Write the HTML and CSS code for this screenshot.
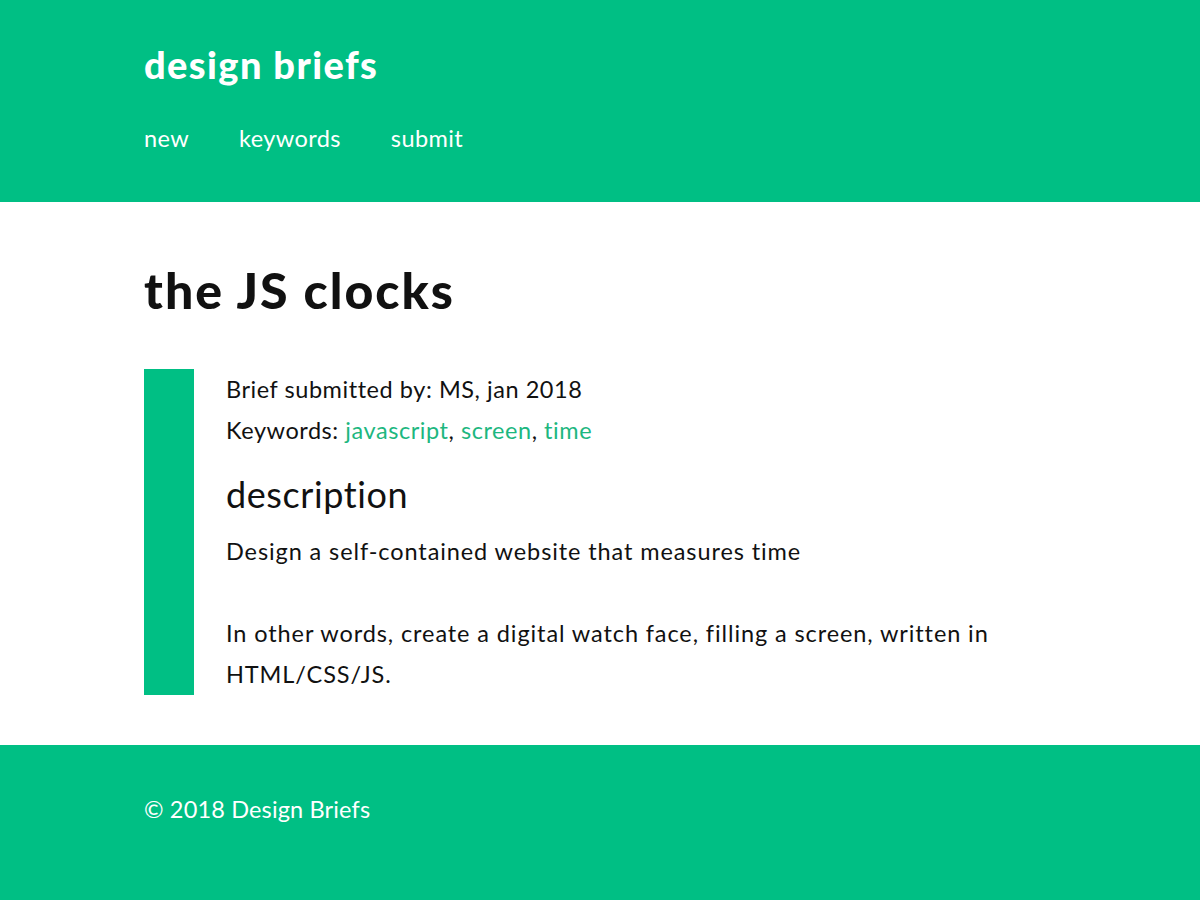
FILE: index.html
```html
<!DOCTYPE html>
<html>
<head>
<meta charset="utf-8">
<link rel="stylesheet" href="styles.css">
</head>
<body>
<header class="site-header">
  <div class="wrap">
    <div class="logo">design briefs</div>
    <nav class="nav">
      <a href="#">new</a>
      <a href="#">keywords</a>
      <a href="#">submit</a>
    </nav>
  </div>
</header>
<main class="main">
  <div class="wrap">
    <h1 class="title">the JS clocks</h1>
    <div class="brief">
      <div class="bar"></div>
      <div class="brief-body">
        <p class="meta">Brief submitted by: MS, jan 2018</p>
        <p class="meta">Keywords: <a href="#">javascript</a>, <a href="#">screen</a>, <a href="#">time</a></p>
        <h2 class="sub">description</h2>
        <p class="desc">Design a self-contained website that measures time<br><br>In other words, create a digital watch face, filling a screen, written in HTML/CSS/JS.</p>
      </div>
    </div>
  </div>
</main>
<footer class="site-footer">
  <div class="wrap">© 2018 Design Briefs</div>
</footer>
</body>
</html>
```
FILE: styles.css
```css
* { box-sizing: border-box; }
html, body { margin: 0; padding: 0; }
body {
  font-family: "Lato", "Open Sans", sans-serif;
  color: #111;
  background: #fff;
  width: 1200px;
  height: 900px;
  overflow: hidden;
}
.wrap { width: 912px; margin: 0 0 0 144px; }
.site-header { background: #00bf84; height: 202px; padding-top: 42px; }
.logo { color: #fff; font-weight: 900; font-size: 38px; line-height: 44px; letter-spacing: 1.4px; }
.nav { display: flex; gap: 50px; margin-top: 36px; }
.nav a { color: #fff; text-decoration: none; font-size: 23.5px; line-height: 32px; letter-spacing: 0.4px; }
.main { padding-top: 60px; padding-bottom: 50px; }
.title { margin: 0; font-size: 50px; line-height: 56px; font-weight: 900; color: #111; letter-spacing: 2px; }
.brief { display: flex; margin-top: 51px; }
.bar { width: 50px; background: #00bf84; flex: none; margin-right: 32px; }
.brief-body { flex: 1; max-width: 800px; }
.meta { margin: 0; font-size: 23.5px; line-height: 41px; letter-spacing: 0.55px; }
.meta a { color: #1db77f; text-decoration: none; }
.sub { margin: 18px 0 12px; font-weight: 400; font-size: 36px; line-height: 50px; letter-spacing: 0.6px; }
.desc { margin: 0; font-size: 23.5px; line-height: 41px; letter-spacing: 0.9px; }
.site-footer { background: #00bf84; height: 160px; padding-top: 48px; color: #fff; font-size: 23.5px; line-height: 32px; letter-spacing: 0.15px; }
```
